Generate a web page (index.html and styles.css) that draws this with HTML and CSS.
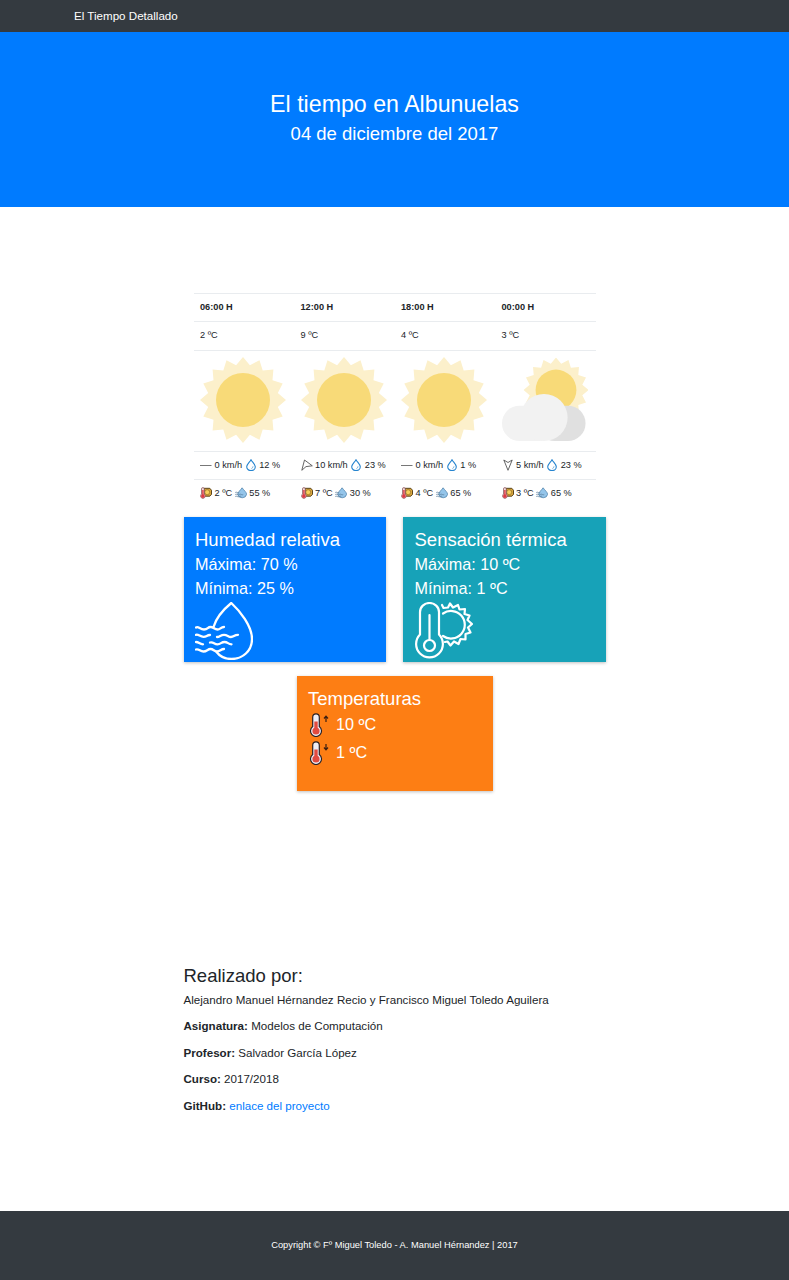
FILE: index.html
```
<!DOCTYPE html>
<html lang="es">
<head>
<meta charset="utf-8">
<title>El Tiempo Detallado</title>
<link rel="stylesheet" href="styles.css">
</head>
<body>
<svg class="defs" aria-hidden="true">
  <symbol id="rays" viewBox="-43 -43 86 86">
    <polygon points="0,-43 6.9,-34.8 16.5,-39.7 19.7,-29.5 30.4,-30.4 29.5,-19.7 39.7,-16.5 34.8,-6.9 43,0 34.8,6.9 39.7,16.5 29.5,19.7 30.4,30.4 19.7,29.5 16.5,39.7 6.9,34.8 0,43 -6.9,34.8 -16.5,39.7 -19.7,29.5 -30.4,30.4 -29.5,19.7 -39.7,16.5 -34.8,6.9 -43,0 -34.8,-6.9 -39.7,-16.5 -29.5,-19.7 -30.4,-30.4 -19.7,-29.5 -16.5,-39.7 -6.9,-34.8" fill="#fcf0cb"/>
    <circle r="27" fill="#f8da78"/>
  </symbol>
  <symbol id="cloudy" viewBox="0 0 86 86">
    <use href="#rays" x="21.5" y="0.5" width="65" height="65"/>
    <rect x="35" y="48.7" width="48.5" height="35.3" rx="17.6" fill="#e0e0e0"/>
    <rect x="0" y="48.7" width="55" height="35.3" rx="17.6" fill="#f2f2f2"/>
    <circle cx="42" cy="60.5" r="23.6" fill="#f2f2f2"/>
  </symbol>
  <symbol id="calm" viewBox="0 0 12 12"><path d="M0 6.500H11.500" stroke="#777" stroke-width="1" fill="none"/></symbol>
  <symbol id="wind-sw" viewBox="0 0 12 12"><path d="M3.500 1L11.300 6.800L5 7.600L.8 11.300Z" stroke="#555" stroke-width=".9" fill="none"/></symbol>
  <symbol id="wind-s" viewBox="0 0 12 12"><path d="M1.800 1L6 3.500L10.200 1L6 11.300Z" stroke="#555" stroke-width=".9" fill="none"/></symbol>
  <symbol id="drop" viewBox="0 0 12 12"><path d="M6 .7C4.400 3.400 1.700 5.600 1.700 7.800A4.200 3.700 0 0 0 10.300 7.800C10.300 5.600 7.600 3.400 6 .7Z" fill="#fff" stroke="#2584cf" stroke-width="1.100"/><path d="M8 7.300Q7.900 9 6.400 9.600" fill="none" stroke="#2584cf" stroke-width=".6"/></symbol>
  <symbol id="feel" viewBox="0 0 12 12">
    <path d="M4 1.300H9.800L11.500 3.300V7.300L9.800 9.200H4Z" fill="#d9a63c" stroke="#4b3510" stroke-width=".9"/>
    <circle cx="7.200" cy="5.200" r="2.500" fill="#f6cf5c" stroke="#705018" stroke-width=".5"/>
    <path d="M1.500 7V1.900a1.400 1.300 0 0 1 2.800 0V7a2.400 2.400 0 1 1-2.800 0Z" fill="#f5dcdc" stroke="#80484d" stroke-width=".7"/>
    <path d="M2.900 3V9" stroke="#dc3b45" stroke-width="1.400"/><circle cx="2.900" cy="9.100" r="1.900" fill="#dc3b45"/>
  </symbol>
  <symbol id="humid" viewBox="0 0 12 12">
    <path d="M7.100.8C5.400 3.300 2.700 5.200 2.700 7.300a4.500 4.100 0 0 0 8.900 0C11.600 5.200 8.800 3.300 7.100.8Z" fill="#94c5ea" stroke="#477ba5" stroke-width=".7"/>
    <path d="M.2 5.500q1-.7 2 0t2 0M.2 7.500q1-.7 2 0t2 0t2 0t2 0M.2 9.500q1-.7 2 0t2 0t2 0" fill="none" stroke="#567a99" stroke-width=".7"/>
  </symbol>
  <symbol id="thermo" viewBox="0 0 20 24">
    <path d="M4.700 13.600V4.200a3.300 3.300 0 0 1 6.600 0v9.400a5.500 5.500 0 1 1-6.600 0Z" fill="#eeeef6" stroke="#2b2024" stroke-width="1.200"/>
    <path d="M8 8.500V17" stroke="#e14b40" stroke-width="3.400"/><circle cx="8" cy="18" r="3.600" fill="#e14b40"/>
  </symbol>
</svg>

<nav class="navbar"><a class="brand">El Tiempo Detallado</a></nav>
<header class="hero">
  <h1>El tiempo en Albunuelas</h1>
  <h2>04 de diciembre del 2017</h2>
</header>

<main class="content">
  <table class="forecast">
    <tr><th>06:00 H</th><th>12:00 H</th><th>18:00 H</th><th>00:00 H</th></tr>
    <tr><td>2 ºC</td><td>9 ºC</td><td>4 ºC</td><td>3 ºC</td></tr>
    <tr class="sky">
      <td><svg class="sky-icon"><use href="#rays"/></svg></td>
      <td><svg class="sky-icon"><use href="#rays"/></svg></td>
      <td><svg class="sky-icon"><use href="#rays"/></svg></td>
      <td><svg class="sky-icon"><use href="#cloudy"/></svg></td>
    </tr>
    <tr>
      <td><svg class="mini"><use href="#calm"/></svg> 0 km/h <svg class="mini"><use href="#drop"/></svg> 12 %</td>
      <td><svg class="mini"><use href="#wind-sw"/></svg> 10 km/h <svg class="mini"><use href="#drop"/></svg> 23 %</td>
      <td><svg class="mini"><use href="#calm"/></svg> 0 km/h <svg class="mini"><use href="#drop"/></svg> 1 %</td>
      <td><svg class="mini"><use href="#wind-s"/></svg> 5 km/h <svg class="mini"><use href="#drop"/></svg> 23 %</td>
    </tr>
    <tr>
      <td><svg class="mini"><use href="#feel"/></svg> 2 ºC <svg class="mini"><use href="#humid"/></svg> 55 %</td>
      <td><svg class="mini"><use href="#feel"/></svg> 7 ºC <svg class="mini"><use href="#humid"/></svg> 30 %</td>
      <td><svg class="mini"><use href="#feel"/></svg> 4 ºC <svg class="mini"><use href="#humid"/></svg> 65 %</td>
      <td><svg class="mini"><use href="#feel"/></svg> 3 ºC <svg class="mini"><use href="#humid"/></svg> 65 %</td>
    </tr>
  </table>

  <div class="cards">
    <section class="card humidity">
      <h3>Humedad relativa</h3>
      <p>Máxima: 70 %</p>
      <p>Mínima: 25 %</p>
      <svg class="card-icon" viewBox="0 0 58 58" fill="none" stroke="#fff" stroke-width="2.300" stroke-linecap="round" stroke-linejoin="round">
        <path d="M18.500 25C21 16.500 29 7 36.300 1C45 9 57 24 57 37C57 49 47.500 57 36.500 57C30 57 25 54.500 21.500 50"/>
        <path d="M1 25.500C3.500 24 5 27.500 9 27.500S12.500 25 15.500 25S19.500 27.500 22.500 27.500S25.500 25 29 25"/>
        <path d="M1 32.800C3.500 32 5 34.800 8.500 34.800S11.500 33 15 33"/>
        <path d="M22 35C25 35 25.500 32.800 29 32.800S33 35 36 35S39 32.800 43 32.800"/>
        <path d="M1 40C4 40 4.500 42.300 8 42.300"/>
        <path d="M15 40.500C18.500 39.500 19 42.300 22.500 42.300S26 40 29.500 40S33 42.300 36.500 42.300"/>
        <path d="M1 47.500C4 46.500 5 49.500 8.500 49.500S12.500 47 15.500 47S19 49.500 22 49.500S26 47 29 47"/>
      </svg>
    </section>
    <section class="card feeling">
      <h3>Sensación térmica</h3>
      <p>Máxima: 10 ºC</p>
      <p>Mínima: 1 ºC</p>
      <svg class="card-icon" viewBox="0 0 58 58" fill="none" stroke="#fff" stroke-width="2.200" stroke-linejoin="round" stroke-linecap="round">
        <path d="M5 32.500V10a9.500 9 0 0 1 19 0V32.500a13.400 13.400 0 1 1-19 0Z"/>
        <path d="M14.500 13V38"/><circle cx="14.500" cy="43.500" r="5.500"/>
        <path d="M28 11.500A13.800 13.800 0 1 1 28 34"/>
        <path d="M27 3L28.500 6L33 5.500L35 1.500L38 5.500L43 3L44.500 7.500L50 7L49.500 12L54.500 13.500L52.500 18L57 22L53 25.500L55.500 30.500L50.500 32L50.500 37.500L45.500 37L43.500 42L39 39.500L35.500 43.500L32.500 39.500L30 40"/>
      </svg>
    </section>
    <section class="card temps">
      <h3>Temperaturas</h3>
      <p><svg class="thermo" viewBox="0 0 20 24"><use href="#thermo" width="20" height="24"/><path d="M18 9V3.500M16 5.500L18 3.200L20 5.500" stroke="#3b1e12" stroke-width="1.200" fill="none"/></svg>10 ºC</p>
      <p><svg class="thermo" viewBox="0 0 20 24"><use href="#thermo" width="20" height="24"/><path d="M18 3V8.500M16 6.500L18 8.800L20 6.500" stroke="#3b1e12" stroke-width="1.200" fill="none"/></svg>1 ºC</p>
    </section>
  </div>

  <section class="about">
    <h2>Realizado por:</h2>
    <p>Alejandro Manuel Hérnandez Recio y Francisco Miguel Toledo Aguilera</p>
    <p><b>Asignatura:</b> Modelos de Computación</p>
    <p><b>Profesor:</b> Salvador García López</p>
    <p><b>Curso:</b> 2017/2018</p>
    <p><b>GitHub:</b> <a>enlace del proyecto</a></p>
  </section>
</main>
<footer class="footer">Copyright © Fº Miguel Toledo - A. Manuel Hérnandez | 2017</footer>
</body>
</html>
```
FILE: styles.css
```
* { box-sizing: border-box; }
body {
  margin: 0;
  height: 1280px;
  display: flex;
  flex-direction: column;
  background: #fff;
  color: #212529;
  font-family: "Liberation Sans", Arial, sans-serif;
  font-size: 11.6px;
  white-space: nowrap;
}
h1, h2, h3, p { margin: 0; font-weight: 400; }
.defs { display: none; }

.navbar {
  height: 32px;
  padding-left: 74px;
  background: #343a40;
  color: #fff;
  line-height: 32px;
}
.hero {
  height: 174.5px;
  padding-top: 58px;
  background: #007bff;
  color: #fff;
  text-align: center;
}
.hero h1 { font-size: 23.2px; line-height: 28px; }
.hero h2 { font-size: 18.5px; line-height: 22px; margin-top: 5px; }

.content { width: 422px; margin-left: 183.5px; padding-top: 86.5px; flex: 1; }

.forecast {
  width: 402px;
  margin-left: 10px;
  table-layout: fixed;
  border-collapse: collapse;
  font-size: 9.2px;
}
.forecast tr { height: 28.3px; }
.forecast tr.sky { height: 101px; }
.forecast th, .forecast td {
  padding: 0 0 1px 6.5px;
  border-top: 1px solid #e9ecef;
  text-align: left;
  vertical-align: middle;
}
.sky-icon { display: block; width: 86px; height: 86px; }
.mini { width: 12px; height: 12px; vertical-align: -3.5px; }

.cards {
  display: flex;
  flex-wrap: wrap;
  justify-content: space-between;
  row-gap: 14px;
  margin-top: 9px;
}
.card {
  width: 202.5px;
  height: 145px;
  padding: 11px 12px 0 11.5px;
  color: #fff;
  box-shadow: 0 1px 3px rgba(0, 0, 0, .25);
}
.card h3 { font-size: 18.5px; line-height: 23px; }
.card p { font-size: 16.2px; line-height: 24px; }
.card h3 + p { margin-top: 1px; }
.card-icon { display: block; width: 58px; height: 58px; margin-top: 2px; }
.humidity { background: #007bff; }
.feeling { background: #17a2b8; }
.temps { width: 196px; height: 115px; margin: 0 auto; background: #fd7e14; }
.temps p { display: flex; align-items: center; height: 28px; }
.temps h3 + p { margin-top: 0; }
.thermo { width: 20px; height: 24px; margin: 3px 8px 0 0; overflow: visible; }

.about { margin-top: 174px; }
.about h2 { font-size: 18.5px; line-height: 22px; margin-bottom: 4px; }
.about p { line-height: 17px; margin-bottom: 9.5px; }
.about a { color: #007bff; }

.footer {
  height: 69px;
  background: #343a40;
  color: #fff;
  font-size: 9.3px;
  line-height: 68px;
  text-align: center;
}
```
